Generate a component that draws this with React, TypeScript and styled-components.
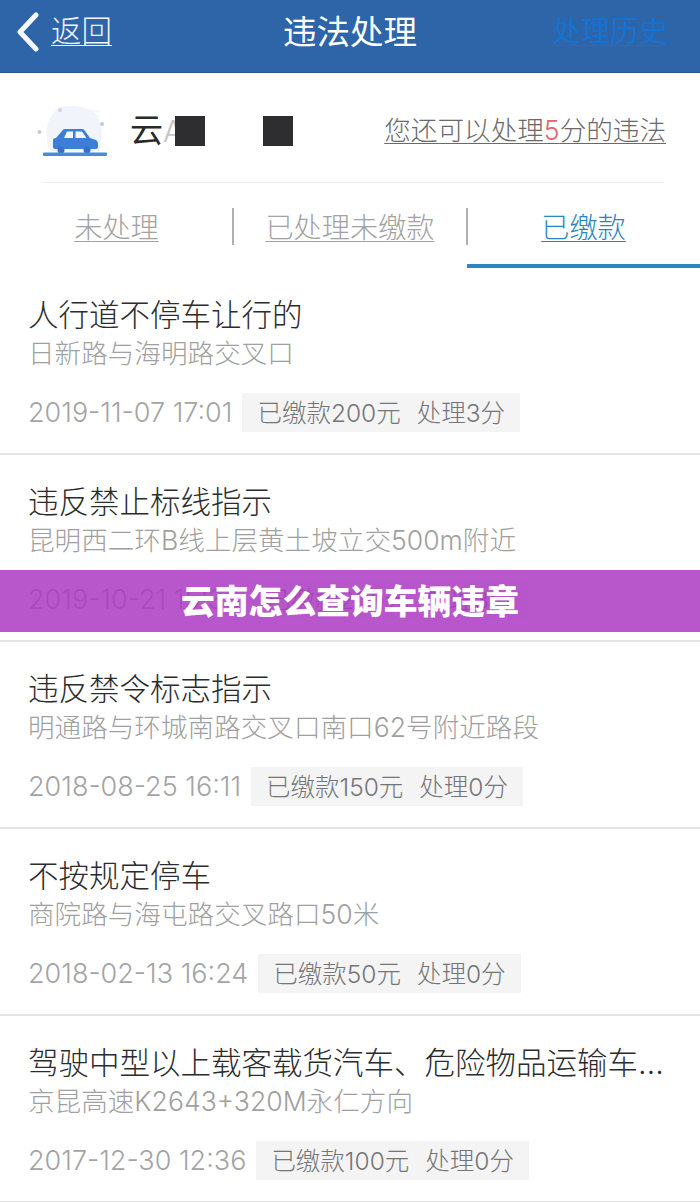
import React from 'react';
import styled, { createGlobalStyle } from 'styled-components';

const FONT = `Inter, "Noto Sans CJK SC", sans-serif`;

const GlobalStyle = createGlobalStyle`
    html, body {
        margin: 0;
        padding: 0;
        background: #fff;
    }
    body {
        font-family: ${FONT};
    }
`;

const Page = styled.div`
    position: relative;
    width: 700px;
    height: 1202px;
    overflow: hidden;
    background: #fff;
`;

const Header = styled.header`
    display: grid;
    grid-template-columns: 1fr auto 1fr;
    align-items: center;
    height: 73px;
    box-sizing: border-box;
    padding: 0 32px 14px;
    background: #2d65a8;
    border-bottom: 1px solid #28578f;
`;

const BackLink = styled.div`
    display: flex;
    align-items: center;
    gap: 11px;
    margin-left: -16px;
    color: #f2f6fb;
    font-size: 30.5px;
    font-weight: 300;
    text-decoration: underline;
    text-decoration-thickness: 1px;
    text-underline-offset: 3px;
`;

const BackSvg = styled.svg`
    flex: none;
    transform: translateY(3px);
`;

const HeaderTitle = styled.div`
    color: #fff;
    font-size: 33.5px;
    font-weight: 400;
`;

const HistoryLink = styled.div`
    justify-self: end;
    color: #1572d2;
    font-size: 29px;
    text-decoration: underline;
    text-decoration-thickness: 1px;
    text-underline-offset: 3px;
`;

const PlateRow = styled.section`
    display: flex;
    align-items: center;
    height: 110px;
    box-sizing: border-box;
    margin: 0 36px 0 43px;
    padding: 8px 0 2px;
    border-bottom: 1px solid #f0f0f0;
`;

const CarSvg = styled.svg`
    flex: none;
    margin-left: -6px;
`;

const Plate = styled.div`
    display: flex;
    align-items: center;
    margin-left: 21px;
    margin-top: 1px;
    color: #2a2a2a;
    font-size: 33px;
    font-weight: 400;
`;

const PlateChar = styled.span`
    margin-bottom: 7px;
`;

const PlateLetter = styled.span`
    color: #c4c4c4;
    font-size: 30px;
    font-weight: 300;
`;

const PlateMask = styled.span<{ $gap: number }>`
    width: 30px;
    height: 30px;
    margin-left: ${props => props.$gap}px;
    background: #2e2e30;
`;

const Quota = styled.div`
    margin-left: auto;
    margin-right: -2px;
    margin-bottom: 4px;
    color: #6a6a6a;
    font-size: 26.6px;
    font-weight: 300;
    white-space: nowrap;
    text-decoration: underline;
    text-decoration-thickness: 1px;
    text-underline-offset: 3px;
`;

const QuotaNumber = styled.span`
    color: #e8606a;
`;

const Tabs = styled.nav`
    display: grid;
    grid-template-columns: 233px 234px 233px;
    height: 85px;
`;

const Tab = styled.div<{ $active?: boolean; $divider?: boolean }>`
    position: relative;
    display: flex;
    justify-content: center;
    padding-top: 22px;
    box-sizing: border-box;
    color: ${props => (props.$active ? '#2a86bd' : '#a2a2a4')};
    font-size: 28.2px;
    font-weight: 300;
    border-bottom: 4px solid ${props => (props.$active ? '#2a86c4' : 'transparent')};
    text-decoration: underline;
    text-decoration-thickness: 1px;
    text-underline-offset: 3px;

    &::after {
        content: ${props => (props.$divider ? '""' : 'none')};
        position: absolute;
        right: -1px;
        top: 25px;
        width: 2px;
        height: 37px;
        background: #b0b0b0;
    }
`;

const List = styled.ul`
    list-style: none;
    margin: 0;
    padding: 0;
`;

const Item = styled.li`
    height: 187px;
    box-sizing: border-box;
    padding: 26px 28px 0;
    border-bottom: 2px solid #e4e4e4;
`;

const ItemTitle = styled.div`
    overflow: hidden;
    height: 42px;
    color: #2c2c2e;
    font-size: 30.5px;
    font-weight: 300;
    line-height: 42px;
    white-space: nowrap;
`;

const ItemPlace = styled.div`
    height: 36px;
    margin-top: -1px;
    color: #a0a0a0;
    font-size: 26.6px;
    font-weight: 300;
    line-height: 36px;
    white-space: nowrap;
`;

const ItemMeta = styled.div`
    display: flex;
    align-items: center;
    gap: 10px;
    margin-top: 22px;
`;

const ItemDate = styled.span`
    margin-bottom: 1px;
    color: #a4a4a4;
    font-size: 27px;
    font-weight: 300;
    white-space: nowrap;
`;

const FeeTag = styled.span`
    display: flex;
    align-items: center;
    gap: 16px;
    height: 39px;
    box-sizing: border-box;
    padding: 0 15px 3px;
    background: #f4f4f5;
    color: #757577;
    font-size: 24.5px;
    font-weight: 300;
    white-space: nowrap;
`;

const Banner = styled.div`
    position: absolute;
    left: 0;
    right: 0;
    top: 570px;
    display: flex;
    align-items: center;
    justify-content: center;
    height: 62px;
    box-sizing: border-box;
    padding-bottom: 3px;
    background: rgba(172, 58, 194, 0.85);
    color: #fff;
    font-size: 33.8px;
    font-weight: 900;
`;

const violations = [
    { title: '人行道不停车让行的', place: '日新路与海明路交叉口', date: '2019-11-07 17:01', fee: '已缴款200元', points: '处理3分' },
    { title: '违反禁止标线指示', place: '昆明西二环B线上层黄土坡立交500m附近', date: '2019-10-21 15:33', fee: '已缴款200元', points: '处理3分' },
    { title: '违反禁令标志指示', place: '明通路与环城南路交叉口南口62号附近路段', date: '2018-08-25 16:11', fee: '已缴款150元', points: '处理0分' },
    { title: '不按规定停车', place: '商院路与海屯路交叉路口50米', date: '2018-02-13 16:24', fee: '已缴款50元', points: '处理0分' },
    { title: '驾驶中型以上载客载货汽车、危险物品运输车…', place: '京昆高速K2643+320M永仁方向', date: '2017-12-30 12:36', fee: '已缴款100元', points: '处理0分' },
];

const BackIcon = () => (
    <BackSvg width="24" height="40" viewBox="0 0 24 40" fill="none">
        <path d="M20 3 L4 20 L20 37" stroke="#f4f7fb" strokeWidth="5" strokeLinecap="round" strokeLinejoin="round" />
    </BackSvg>
);

const CarIcon = () => (
    <CarSvg width="72" height="56" viewBox="0 0 72 56" fill="none">
        <path d="M10 34 C8 22 14 8 24 4 C36 1 50 4 58 10 C65 18 67 34 62 48 L14 48 C11 44 10 40 10 34 Z" fill="#f1f5fb" />
        <path d="M44 8 H64 M52 13 H62" stroke="#f3f5f8" strokeWidth="1.5" />
        <circle cx="23" cy="7" r="2" fill="#cdd5df" />
        <circle cx="65" cy="21" r="2" fill="#c3ccd8" />
        <circle cx="2.5" cy="29" r="2" fill="#c3ccd8" />
        <path d="M19 35 L25 28 Q26 26 28 26 H45 Q47 26 48 28 L53 35 L59 37 Q61 38 61 41 V44 Q61 46 59 46 H18 Q16 46 16 44 V37 Q16 35 19 35 Z" fill="#3d7fd6" />
        <path d="M27 35 L30 28.5 H36 V35 Z M38.5 28.5 H45 L49.5 35 H38.5 Z" fill="#f4f8fd" />
        <circle cx="24" cy="47" r="3.5" fill="#3671c2" />
        <circle cx="50" cy="47" r="3.5" fill="#3671c2" />
        <rect x="6" y="49.5" width="64" height="3.5" rx="1" fill="#4a8bd8" />
    </CarSvg>
);

const App: React.FC = () => (
    <Page>
        <GlobalStyle />
        <Header>
            <BackLink>
                <BackIcon />
                <span>返回</span>
            </BackLink>
            <HeaderTitle>违法处理</HeaderTitle>
            <HistoryLink>处理历史</HistoryLink>
        </Header>
        <PlateRow>
            <CarIcon />
            <Plate>
                <PlateChar>云</PlateChar>
                <PlateLetter>A</PlateLetter>
                <PlateMask $gap={-8} />
                <PlateMask $gap={58} />
            </Plate>
            <Quota>
                您还可以处理<QuotaNumber>5</QuotaNumber>分的违法
            </Quota>
        </PlateRow>
        <Tabs>
            <Tab $divider>未处理</Tab>
            <Tab $divider>已处理未缴款</Tab>
            <Tab $active>已缴款</Tab>
        </Tabs>
        <List>
            {violations.map(item => (
                <Item key={item.date}>
                    <ItemTitle>{item.title}</ItemTitle>
                    <ItemPlace>{item.place}</ItemPlace>
                    <ItemMeta>
                        <ItemDate>{item.date}</ItemDate>
                        <FeeTag>
                            <span>{item.fee}</span>
                            <span>{item.points}</span>
                        </FeeTag>
                    </ItemMeta>
                </Item>
            ))}
        </List>
        <Banner>云南怎么查询车辆违章</Banner>
    </Page>
);

export default App;
